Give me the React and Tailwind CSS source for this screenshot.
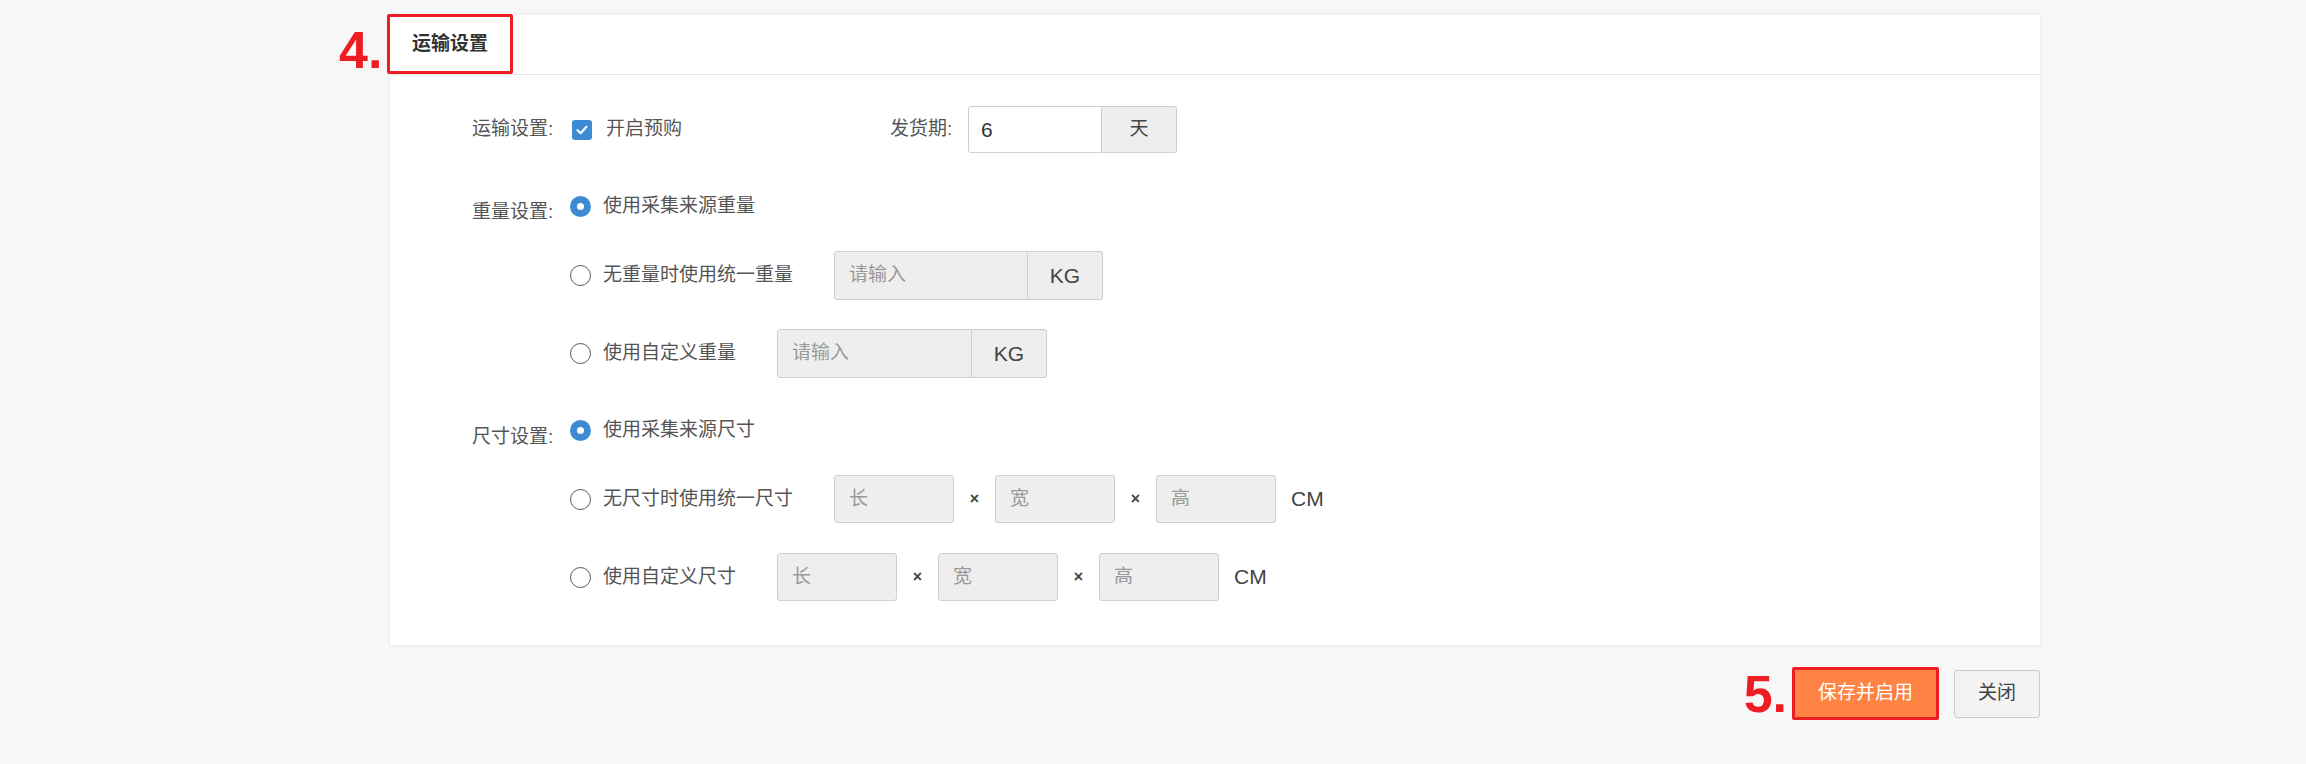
const FONT = { fontFamily: '"Liberation Sans", "Noto Sans CJK SC", sans-serif' };

function Checkbox() {
  return (
    <span className="flex h-[20px] w-[20px] items-center justify-center rounded-[3px] bg-[#3d8bd2]">
      <svg width="14" height="14" viewBox="0 0 14 14" fill="none">
        <path d="M2.5 7.2l3 3 6-6.4" stroke="#fff" strokeWidth="2.2" strokeLinecap="round" strokeLinejoin="round" />
      </svg>
    </span>
  );
}

function Radio({ checked }) {
  if (checked) {
    return (
      <span className="flex h-[21px] w-[21px] shrink-0 items-center justify-center rounded-full bg-[#3d8bd2]">
        <span className="h-[7px] w-[7px] rounded-full bg-white" />
      </span>
    );
  }
  return <span className="h-[21px] w-[21px] shrink-0 rounded-full border-[1.5px] border-[#555] bg-white" />;
}

function Option({ checked, children }) {
  return (
    <div className="flex items-center gap-[12px]">
      <Radio checked={checked} />
      <span className="whitespace-nowrap text-[19px] text-[#555]">{children}</span>
    </div>
  );
}

function UnitInput({ width, placeholder, unit }) {
  return (
    <div className="ml-[41px] flex h-[49px]">
      <div
        className="flex items-center rounded-l-[3px] border border-[#cfcfcf] bg-[#eeeeee] pl-[14px] text-[19px] text-[#999]"
        style={{ width }}
      >
        {placeholder}
      </div>
      <div className="flex w-[75px] items-center justify-center rounded-r-[3px] border border-l-0 border-[#cfcfcf] bg-[#eeeeee] text-[21px] text-[#444]">
        {unit}
      </div>
    </div>
  );
}

function DimBox({ label }) {
  return (
    <div className="flex h-[48px] w-[120px] items-center rounded-[3px] border border-[#cfcfcf] bg-[#eeeeee] pl-[14px] text-[19px] text-[#999]">
      {label}
    </div>
  );
}

function DimInputs() {
  return (
    <div className="ml-[41px] flex items-center">
      <DimBox label="长" />
      <span className="w-[41px] text-center text-[16px] font-bold text-[#444]">×</span>
      <DimBox label="宽" />
      <span className="w-[41px] text-center text-[16px] font-bold text-[#444]">×</span>
      <DimBox label="高" />
      <span className="ml-[15px] text-[21px] text-[#444]">CM</span>
    </div>
  );
}

export default function App() {
  return (
    <div className="h-[764px] w-full bg-[#f7f7f7] pt-[15px]" style={FONT}>
      <div className="ml-[390px] w-[1650px]">
        <div className="bg-white shadow-[0_0_4px_rgba(0,0,0,0.08)]">
          <div className="relative flex h-[60px] border-b border-[#e6e6e6]">
            <span className="absolute left-[-51px] top-[9px] text-[52px] font-bold leading-none text-[#ee1d23]">4.</span>
            <div className="-ml-[3px] -mt-[1px] flex h-[60px] w-[126px] items-center justify-center rounded-[2px] border-[3px] border-[#ee1d23] text-[19px] font-bold text-[#333]">
              运输设置
            </div>
          </div>

          <div className="pb-[44px] pl-[82px] pt-[31px]">
            <div className="flex h-[47px] items-center">
              <span className="w-[98px] text-[19px] text-[#555]">运输设置:</span>
              <div className="flex w-[320px] items-center gap-[14px] pl-[2px]">
                <Checkbox />
                <span className="text-[19px] text-[#555]">开启预购</span>
              </div>
              <span className="w-[78px] text-[19px] text-[#555]">发货期:</span>
              <div className="flex h-[47px]">
                <div className="flex w-[134px] items-center rounded-l-[3px] border border-[#cfcfcf] bg-white pl-[12px] text-[21px] text-[#333]">
                  6
                </div>
                <div className="flex w-[75px] items-center justify-center rounded-r-[3px] border border-l-0 border-[#cfcfcf] bg-[#eeeeee] text-[19px] text-[#444]">
                  天
                </div>
              </div>
            </div>

            <div className="mt-[38px] flex">
              <span className="w-[98px] pt-[6px] text-[19px] leading-[30px] text-[#555]">重量设置:</span>
              <div className="flex flex-col">
                <div className="flex h-[30px] items-center">
                  <Option checked>使用采集来源重量</Option>
                </div>
                <div className="mt-[30px] flex h-[49px] items-center">
                  <Option>无重量时使用统一重量</Option>
                  <UnitInput width={194} placeholder="请输入" unit="KG" />
                </div>
                <div className="mt-[29px] flex h-[49px] items-center">
                  <Option>使用自定义重量</Option>
                  <UnitInput width={195} placeholder="请输入" unit="KG" />
                </div>
              </div>
            </div>

            <div className="mt-[37px] flex">
              <span className="w-[98px] pt-[7px] text-[19px] leading-[30px] text-[#555]">尺寸设置:</span>
              <div className="flex flex-col">
                <div className="flex h-[30px] items-center">
                  <Option checked>使用采集来源尺寸</Option>
                </div>
                <div className="mt-[30px] flex h-[48px] items-center">
                  <Option>无尺寸时使用统一尺寸</Option>
                  <DimInputs />
                </div>
                <div className="mt-[30px] flex h-[48px] items-center">
                  <Option>使用自定义尺寸</Option>
                  <DimInputs />
                </div>
              </div>
            </div>
          </div>
        </div>

        <div className="mt-[22px] flex items-center justify-end">
          <span className="mr-[5px] text-[52px] font-bold leading-none text-[#ee1d23]">5.</span>
          <button className="flex h-[53px] w-[147px] items-center justify-center rounded-[2px] border-[3px] border-[#ee1d23] bg-[#ff8444] text-[19px] text-white">
            保存并启用
          </button>
          <button className="ml-[15px] flex h-[48px] w-[86px] items-center justify-center rounded-[3px] border border-[#cccccc] bg-[#f3f3f3] text-[19px] text-[#444]">
            关闭
          </button>
        </div>
      </div>
    </div>
  );
}
